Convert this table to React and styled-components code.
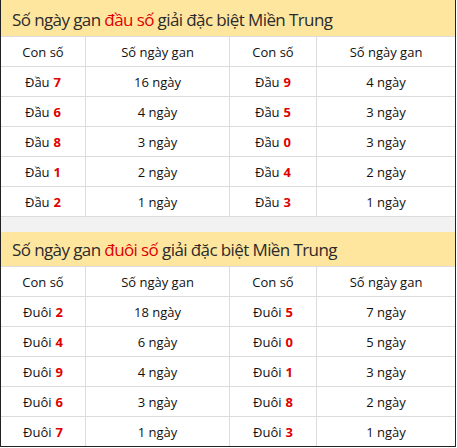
import React from "react";
import styled, { createGlobalStyle } from "styled-components";

const Global = createGlobalStyle`
  html, body { margin: 0; padding: 0; background: #fff; }
  body { font-family: "Open Sans", "Noto Sans", sans-serif; }
`;

const Wrapper = styled.div`
  width: 456px;
  box-sizing: border-box;
  border-left: 1px solid #222;
  border-right: 1px solid #222;
  border-bottom: 1px solid #222;
  background: #fff;
`;

const Section = styled.section`
  display: flex;
  flex-direction: column;
`;

const Title = styled.h2`
  margin: 0;
  height: ${(p) => p.$h}px;
  box-sizing: border-box;
  display: flex;
  align-items: center;
  padding: ${(p) => p.$pt}px 0 0 11px;
  background: #ffe69f;
  border-bottom: 1px solid #dcdcdc;
  font-family: "Open Sans", sans-serif;
  font-size: 17px;
  letter-spacing: -0.6px;
  word-spacing: 0px;
  font-weight: 400;
  color: #2b2b2b;
  white-space: nowrap;
`;

const Accent = styled.span`
  color: #e00000;
`;

const Row = styled.div`
  display: grid;
  grid-template-columns: 85px 144px 87px 1fr;
  border-bottom: ${(p) => (p.$last ? "none" : "1px solid #dcdcdc")};
`;

const Cell = styled.div`
  height: 29px;
  box-sizing: border-box;
  display: flex;
  align-items: center;
  justify-content: center;
  border-right: 1px solid #dcdcdc;
  font-size: 13px;
  font-weight: ${(p) => (p.$head ? 500 : 400)};
  color: #111;
  &:last-child { border-right: none; }
`;

const Num = styled.b`
  color: #e00000;
  font-weight: 700;
  margin-left: 4px;
`;

const Gap = styled.div`
  height: 15px;
  background: #f2f2f2;
`;

const dau = [
  ["7", 16, "9", 4],
  ["6", 4, "5", 3],
  ["8", 3, "0", 3],
  ["1", 2, "4", 2],
  ["2", 1, "3", 1],
];
const duoi = [
  ["2", 18, "5", 7],
  ["4", 6, "0", 5],
  ["9", 4, "1", 3],
  ["6", 3, "8", 2],
  ["7", 1, "3", 1],
];

function Table({ label, word, rows, h, pt, lastSection }) {
  return (
    <Section>
      <Title $h={h} $pt={pt}>
        Số ngày gan&nbsp;<Accent>{word}</Accent>&nbsp;giải đặc biệt Miền Trung
      </Title>
      <Row>
        <Cell $head>Con số</Cell>
        <Cell $head>Số ngày gan</Cell>
        <Cell $head>Con số</Cell>
        <Cell $head>Số ngày gan</Cell>
      </Row>
      {rows.map((r, i) => (
        <Row key={i} $last={lastSection && i === rows.length - 1}>
          <Cell>
            {label}
            <Num>{r[0]}</Num>
          </Cell>
          <Cell>{r[1]} ngày</Cell>
          <Cell>
            {label}
            <Num>{r[2]}</Num>
          </Cell>
          <Cell>{r[3]} ngày</Cell>
        </Row>
      ))}
    </Section>
  );
}

export default function App() {
  return (
    <>
      <Global />
      <Wrapper>
        <Table label="Đầu" word="đầu số" rows={dau} h={37} pt={2} />
        <Gap />
        <Table label="Đuôi" word="đuôi số" rows={duoi} h={35} pt={0} lastSection />
      </Wrapper>
    </>
  );
}
